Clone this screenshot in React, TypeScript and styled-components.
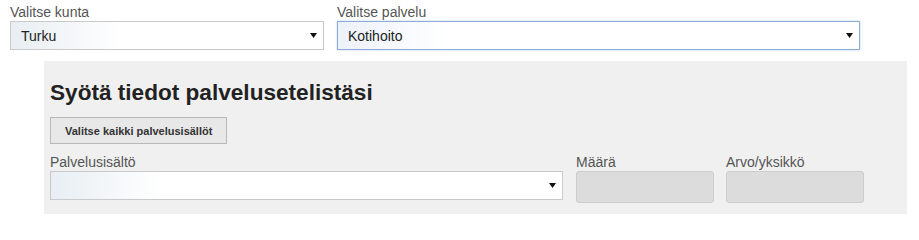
import React from 'react'
import styled, { createGlobalStyle } from 'styled-components'

const GlobalStyle = createGlobalStyle`
  html, body {
    margin: 0;
    padding: 0;
    background: #fff;
    font-family: 'Liberation Sans', Arial, sans-serif;
    color: #333;
  }
`

const Page = styled.div`
  padding: 4px 0 0 10px;
`

const TopRow = styled.div`
  display: flex;
  gap: 13px;
`

const Field = styled.div<{ $width: number }>`
  width: ${({ $width }) => $width}px;
  display: flex;
  flex-direction: column;
`

const Label = styled.label`
  display: block;
  font-size: 14px;
  line-height: 17px;
  color: #555;
`

const SelectBox = styled.div<{ $focused?: boolean }>`
  box-sizing: border-box;
  height: 29px;
  display: flex;
  align-items: center;
  justify-content: space-between;
  padding: 0 6px 0 10px;
  font-size: 14px;
  color: #222;
  border: 1px solid ${({ $focused }) => ($focused ? '#8eabd9' : '#c9c9c9')};
  background: ${({ $focused }) =>
    $focused
      ? 'linear-gradient(to right, #edf2f9 0, #fff 110px)'
      : 'linear-gradient(to right, #e8eef3 0, #fff 110px)'};
  box-shadow: ${({ $focused }) => ($focused ? '0 0 2px rgba(120, 160, 220, 0.5)' : 'none')};
`

const Arrow = () => (
  <svg width="7" height="5" viewBox="0 0 7 5">
    <path d="M0 0 H7 L3.5 5 Z" fill="#111" />
  </svg>
)

const Panel = styled.section`
  margin: 11px 0 0 34px;
  width: 863px;
  box-sizing: border-box;
  background: #f0f0f0;
  padding: 19px 0 11px 6px;
`

const Heading = styled.h2`
  margin: 0;
  font-size: 22.6px;
  line-height: 26px;
  font-weight: bold;
  color: #222;
`

const Button = styled.button`
  margin-top: 11px;
  height: 27px;
  padding: 0 14px;
  font-family: inherit;
  font-size: 11px;
  font-weight: bold;
  color: #333;
  background: #e8e8e8;
  border: 1px solid #b8b8b8;
  border-radius: 0;
`

const FieldsRow = styled.div`
  display: flex;
  gap: 13px;
  margin-top: 10px;
`

const NumberFields = styled.div`
  display: flex;
  gap: 12px;
`

const DisabledInput = styled.div`
  box-sizing: border-box;
  height: 32px;
  background: #dcdcdc;
  border: 1px solid #cdcdcd;
  border-radius: 3px;
`

export default function App() {
  return (
    <>
      <GlobalStyle />
      <Page>
        <TopRow>
          <Field $width={314}>
            <Label>Valitse kunta</Label>
            <SelectBox>
              <span>Turku</span>
              <Arrow />
            </SelectBox>
          </Field>
          <Field $width={523}>
            <Label>Valitse palvelu</Label>
            <SelectBox $focused>
              <span>Kotihoito</span>
              <Arrow />
            </SelectBox>
          </Field>
        </TopRow>
        <Panel>
          <Heading>Syötä tiedot palvelusetelistäsi</Heading>
          <Button>Valitse kaikki palvelusisällöt</Button>
          <FieldsRow>
            <Field $width={513}>
              <Label>Palvelusisältö</Label>
              <SelectBox>
                <span />
                <Arrow />
              </SelectBox>
            </Field>
            <NumberFields>
              <Field $width={138}>
                <Label>Määrä</Label>
                <DisabledInput />
              </Field>
              <Field $width={138}>
                <Label>Arvo/yksikkö</Label>
                <DisabledInput />
              </Field>
            </NumberFields>
          </FieldsRow>
        </Panel>
      </Page>
    </>
  )
}
